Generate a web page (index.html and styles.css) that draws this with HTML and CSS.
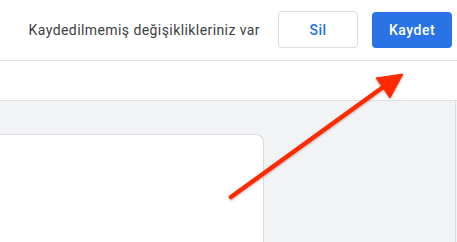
FILE: index.html
```html
<!DOCTYPE html>
<html lang="tr">
<head>
<meta charset="utf-8">
<link rel="stylesheet" href="styles.css">
</head>
<body>
<div class="page">
  <header class="topbar">
    <span class="msg">Kaydedilmemiş değişiklikleriniz var</span>
    <button class="btn btn-outline">Sil</button>
    <button class="btn btn-primary">Kaydet</button>
  </header>
  <div class="strip"></div>
  <main class="canvas">
    <div class="card"></div>
    <div class="side"></div>
  </main>
  <svg class="arrow" width="457" height="242" viewBox="0 0 457 242">
    <defs>
      <filter id="sh" x="-20%" y="-20%" width="140%" height="140%">
        <feDropShadow dx="0" dy="1" stdDeviation="1" flood-color="#000" flood-opacity="0.3"/>
      </filter>
    </defs>
    <g filter="url(#sh)" fill="#ff2a00" stroke="#ff2a00">
      <line x1="231" y1="197" x2="386" y2="85" stroke-width="4.5" stroke-linecap="round"/>
      <polygon points="403,74 376,78 390,98" stroke-width="1" stroke-linejoin="round"/>
    </g>
  </svg>
</div>
</body>
</html>
```
FILE: styles.css
```css
* { box-sizing: border-box; }
html, body { margin: 0; padding: 0; }
body {
  width: 457px;
  height: 242px;
  overflow: hidden;
  background: #fff;
  font-family: Roboto, "Noto Sans", Arial, sans-serif;
}
.page {
  position: relative;
  width: 457px;
  height: 242px;
  display: flex;
  flex-direction: column;
}
.topbar {
  height: 61px;
  flex: none;
  display: flex;
  align-items: center;
  justify-content: flex-end;
  padding: 0 5px 1px 0;
  border-bottom: 1px solid #dfe1e4;
}
.msg {
  font-size: 14px;
  color: #3c4043;
  letter-spacing: 0.42px;
  margin-right: 18px;
}
.btn {
  font-family: Roboto, "Noto Sans", Arial, sans-serif;
  font-size: 14px;
  font-weight: 500;
  width: 80px;
  height: 37px;
  border-radius: 4px;
  padding: 0;
  letter-spacing: 0.5px;
}
.btn-outline {
  background: #fff;
  color: #1a73e8;
  border: 1px solid #dadce0;
  margin-right: 14px;
}
.btn-primary {
  background: #2a73e6;
  color: #fff;
  border: none;
  height: 36px;
}
.strip {
  height: 40px;
  flex: none;
  border-bottom: 1px solid #dfe1e4;
}
.canvas {
  flex: 1;
  background: #f1f3f4;
  display: flex;
  padding-top: 33px;
}
.card {
  width: 264px;
  background: #fff;
  border: 1px solid #dadce0;
  border-left: none;
  border-bottom: none;
  border-top-right-radius: 8px;
}
.side {
  flex: 1;
  margin-top: -33px;
  border-right: 1px solid #dadce0;
  margin-right: 1px;
}
.arrow {
  position: absolute;
  left: 0;
  top: 0;
  pointer-events: none;
}
```
